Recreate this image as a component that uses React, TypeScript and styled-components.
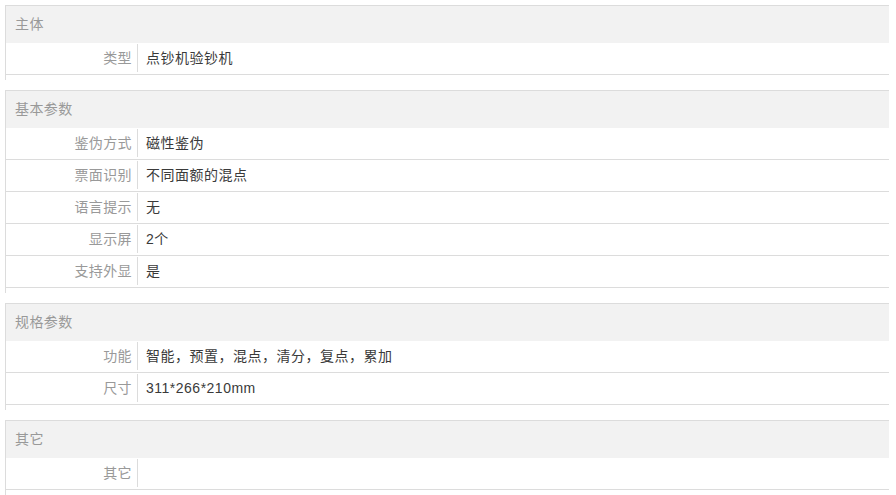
import React from 'react';
import styled, { createGlobalStyle } from 'styled-components';

const GlobalStyle = createGlobalStyle`
  body {
    margin: 0;
    background: #fff;
    font-family: "Liberation Sans", Arial, "Noto Sans CJK SC", sans-serif;
    font-size: 14px;
    letter-spacing: 0.4px;
  }
`;

const Page = styled.div`
  padding: 5px 7px 0 5px;
  width: 884px;
`;

const Section = styled.section`
  border-top: 1px solid #dcdcdc;
  border-left: 1px solid #dcdcdc;
  padding-bottom: 5px;
  margin-bottom: 10px;
`;

const Header = styled.div`
  height: 37px;
  line-height: 37px;
  background: #f2f2f2;
  padding-left: 9px;
  color: #999;
`;

const Row = styled.div`
  display: grid;
  grid-template-columns: 132px 1fr;
  height: 31px;
  border-bottom: 1px solid #dcdcdc;
`;

const Label = styled.div`
  margin: 1px 0 2px;
  padding-right: 5px;
  border-right: 1px solid #dcdcdc;
  color: #999;
  text-align: right;
  line-height: 28px;
`;

const Value = styled.div`
  padding-left: 8px;
  color: #3a3a3a;
  line-height: 30px;
  letter-spacing: 0.5px;
`;

const specs: { title: string; rows: [string, string][] }[] = [
  { title: '主体', rows: [['类型', '点钞机验钞机']] },
  {
    title: '基本参数',
    rows: [
      ['鉴伪方式', '磁性鉴伪'],
      ['票面识别', '不同面额的混点'],
      ['语言提示', '无'],
      ['显示屏', '2个'],
      ['支持外显', '是'],
    ],
  },
  {
    title: '规格参数',
    rows: [
      ['功能', '智能，预置，混点，清分，复点，累加'],
      ['尺寸', '311*266*210mm'],
    ],
  },
  { title: '其它', rows: [['其它', '']] },
];

const App = () => (
  <Page>
    <GlobalStyle />
    {specs.map((s) => (
      <Section key={s.title}>
        <Header>{s.title}</Header>
        {s.rows.map(([k, v]) => (
          <Row key={k}>
            <Label>{k}</Label>
            <Value>{v}</Value>
          </Row>
        ))}
      </Section>
    ))}
  </Page>
);

export default App;
